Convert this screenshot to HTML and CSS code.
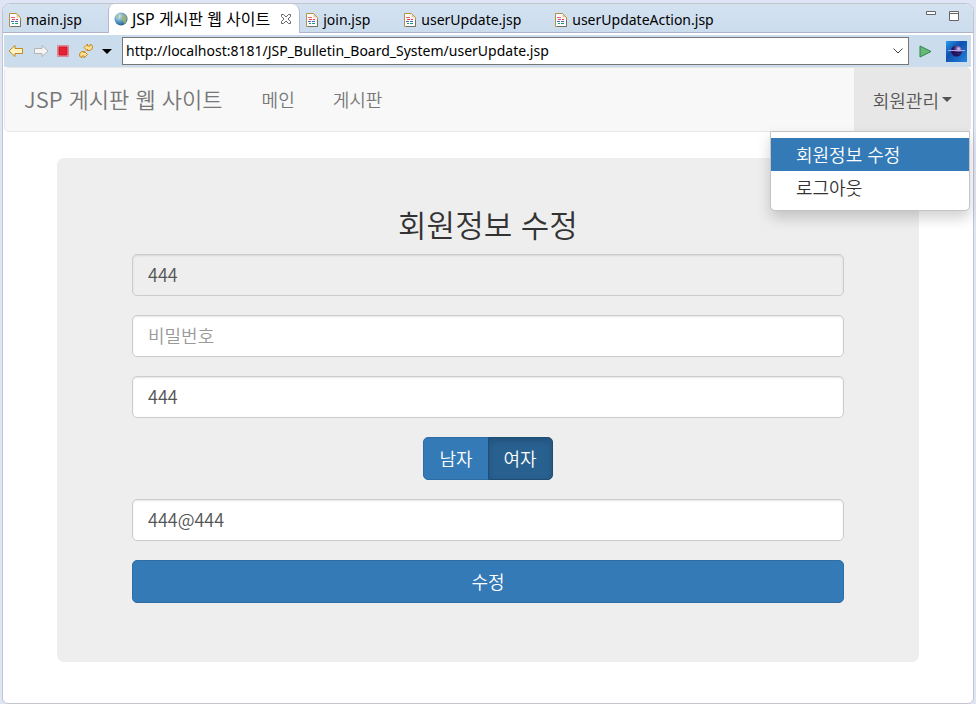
FILE: index.html
```html
<!DOCTYPE html>
<html lang="ko">
<head>
<meta charset="utf-8">
<title>JSP 게시판 웹 사이트</title>
<link rel="stylesheet" href="styles.css">
</head>
<body>
<svg class="defs" aria-hidden="true">
  <symbol id="file" viewBox="0 0 12 14">
    <path d="M.5.500h7l4 4v9H.5z" fill="#f8fbff" stroke="#b8903f"/>
    <path d="M11.500 7v6.500H2" fill="none" stroke="#77705e"/>
    <path d="M7.500 1v3.500H11z" fill="#e8cf91"/>
    <path d="M2 4.500h4" stroke="#f0606f"/><path d="M3 6.500h3M7 6.500h2" stroke="#ee3f55"/>
    <path d="M2 8.500h3M6 8.500h3" stroke="#4a68b8"/><path d="M3 10.500h2M6 10.500h3" stroke="#1f9d68"/>
  </symbol>
</svg>
<div class="editor">
  <nav class="tabs" aria-label="Editors">
    <a class="tab" href="#"><svg class="file"><use href="#file"/></svg>main.jsp</a>
    <a class="tab tab-active" href="#" aria-current="page">
      <svg class="globe" viewBox="0 0 14 14">
        <defs><radialGradient id="sea" cx=".35" cy=".3" r=".8"><stop offset="0" stop-color="#d5ecf8"/><stop offset=".5" stop-color="#5b9cc8"/><stop offset="1" stop-color="#214f7c"/></radialGradient></defs>
        <circle cx="7" cy="7" r="6.500" fill="url(#sea)"/>
        <path d="M8 2l3 1 2 3-1 4-2 2-1-3-2-2 1-2zM2 4l2-2 1 2-1 2z" fill="#a9b96d" opacity=".8"/>
      </svg>
      <span class="tab-title">JSP 게시판 웹 사이트</span>
      <svg class="close" viewBox="0 0 12 12"><path d="M1.500 1.500h2L6 4l2.500-2.500h2v2L8 6l2.500 2.500v2h-2L6 8l-2.500 2.500h-2v-2L4 6 1.500 3.500z" fill="#fff" stroke="#666"/></svg>
    </a>
    <a class="tab" href="#"><svg class="file"><use href="#file"/></svg>join.jsp</a>
    <a class="tab" href="#"><svg class="file"><use href="#file"/></svg>userUpdate.jsp</a>
    <a class="tab" href="#"><svg class="file"><use href="#file"/></svg>userUpdateAction.jsp</a>
    <div class="window-buttons">
      <button aria-label="Minimize"><svg width="10" height="10" viewBox="0 0 10 10"><path d="M.5.500h9v3h-9z" fill="#fff" stroke="#666"/></svg></button>
      <button aria-label="Maximize"><svg width="10" height="10" viewBox="0 0 10 10"><path d="M.5.500h9v9h-9zM.5 2.500h9" fill="#fff" stroke="#666"/></svg></button>
    </div>
  </nav>
  <div class="toolbar">
    <div class="tools">
      <button aria-label="Back"><svg width="16" height="14" viewBox="0 0 16 14"><path d="M1 7l6-5.500v3h7.500v5H7v3z" fill="#fff3c4" stroke="#c28a20" stroke-linejoin="round"/></svg></button>
      <button aria-label="Forward"><svg width="16" height="14" viewBox="0 0 16 14"><path d="M15 7L9 1.500v3H1.500v5H9v3z" fill="#f4f4f4" stroke="#b4b4b4" stroke-linejoin="round"/></svg></button>
      <button aria-label="Stop"><svg width="12" height="12" viewBox="0 0 12 12"><path d="M.5.500h11v11H.5z" fill="#f0a5ad" stroke="#d68a98"/><path d="M2 2h8v8H2z" fill="#e32334" stroke="#cc1427"/></svg></button>
      <button aria-label="Refresh"><svg width="16" height="16" viewBox="0 0 16 16"><path d="M6 4.500L9.500 1v2h2.500V1.500q2.500 0 2.500 2.500T12 7.500h-2.500V6h0v2zM9.500 11.500L6 15v-2H4v1.500q-2.500 0-2.500-2.500T4 8.500h2V10h0V8z" fill="#ffe091" stroke="#c58a25" stroke-linejoin="round"/></svg></button>
      <button aria-label="Refresh options"><svg width="10" height="5" viewBox="0 0 10 5"><path d="M0 0h10L5 5z"/></svg></button>
    </div>
    <div class="address">
      <input type="text" aria-label="URL" value="http://localhost:8181/JSP_Bulletin_Board_System/userUpdate.jsp">
      <button aria-label="URL history"><svg width="10" height="6" viewBox="0 0 10 6"><path d="M.5.500L5 5 9.500.500" fill="none" stroke="#444"/></svg></button>
    </div>
    <button class="go" aria-label="Go"><svg width="13" height="13" viewBox="0 0 13 13"><path d="M1 1l11 5.500L1 12z" fill="#69b978" stroke="#29834a" stroke-linejoin="round"/></svg></button>
    <svg class="eclipse" viewBox="0 0 21 21">
      <defs><linearGradient id="sky" x2="1" y2="1"><stop stop-color="#2a9cf0"/><stop offset=".4" stop-color="#1050ae"/><stop offset="1" stop-color="#2384dd"/></linearGradient>
      <radialGradient id="planet" cx=".7" cy=".3"><stop stop-color="#e4d5f5"/><stop offset=".5" stop-color="#6953a5"/><stop offset="1" stop-color="#24165c"/></radialGradient></defs>
      <path d="M0 0h21v21H0z" fill="url(#sky)"/><circle cx="10.500" cy="10" r="5.500" fill="url(#planet)"/><path d="M2 9.500h17" stroke="#b2a8e9"/><path d="M6 11.500h9" stroke="#201052"/>
    </svg>
  </div>
  <div class="site">
    <header class="navbar">
      <a class="brand" href="#">JSP 게시판 웹 사이트</a>
      <nav class="links"><a href="#">메인</a><a href="#">게시판</a></nav>
      <div class="member">
        <button class="member-toggle" aria-expanded="true">회원관리<span class="caret"></span></button>
        <div class="dropdown"><a class="current" href="#">회원정보 수정</a><a href="#">로그아웃</a></div>
      </div>
    </header>
    <main class="panel">
      <form>
        <h1>회원정보 수정</h1>
        <input class="field" type="text" aria-label="아이디" value="444" readonly>
        <input class="field" type="password" aria-label="비밀번호" placeholder="비밀번호">
        <input class="field" type="text" aria-label="이름" value="444">
        <div class="gender" role="radiogroup" aria-label="성별">
          <label><input type="radio" name="gender">남자</label>
          <label><input type="radio" name="gender" checked>여자</label>
        </div>
        <input class="field" type="text" aria-label="이메일" value="444@444">
        <button class="submit" type="submit">수정</button>
      </form>
    </main>
  </div>
</div>
</body>
</html>
```
FILE: styles.css
```css
* { box-sizing: border-box; }
body {
  margin: 0;
  padding: 3px 2px 0;
  min-height: 100vh;
  display: flex;
  background: #e0e5f5;
  color: #000;
  font: 14px/20px "Noto Sans", "Noto Sans CJK KR", sans-serif;
}
a { color: inherit; text-decoration: none; }
button { padding: 0; border: 0; background: none; color: inherit; font: inherit; }
input { font: inherit; }
svg { display: block; flex: none; }
.defs { position: absolute; width: 0; height: 0; }
.editor {
  flex: 1;
  min-width: 0;
  border: 1px solid #c3c5cd;
  border-radius: 8px 8px 6px 6px;
  background: #fff;
}
.tabs {
  display: flex;
  height: 29px;
  border-bottom: 1px solid #afb4cb;
  border-radius: 7px 7px 0 0;
  background: linear-gradient(#d4e2f0, #cbdced);
}
.tab { display: flex; align-items: center; gap: 5px; padding: 3px 26px 0 6px; white-space: nowrap; }
.tab-active {
  height: 29px;
  gap: 4px;
  padding: 0 7px 0 5px;
  border: solid #b5bad0;
  border-width: 0 1px;
  border-radius: 6px 8px 0 0;
  background: #fff;
}
.tab-active ~ .tab { padding-right: 28px; }
.tab-title { font-size: 16px; }
.file { width: 12px; height: 14px; }
.globe { width: 14px; height: 14px; }
.close { width: 12px; height: 12px; margin-left: 6px; }
.window-buttons { display: flex; gap: 13px; margin: 7px 14px 0 auto; align-self: flex-start; }
.toolbar {
  display: flex;
  align-items: center;
  height: 32px;
  margin: 2px 2px 0 1px;
  padding-right: 4px;
  background: #cbdced;
}
.tools { display: flex; align-items: center; justify-content: space-between; width: 104px; margin: 0 10px 0 4px; }
.address { flex: 1; display: flex; height: 28px; border: 1px solid #777; background: #fff; }
.address input { flex: 1; min-width: 0; padding: 0 3px; border: 0; outline: 0; background: none; }
.address button { padding: 0 5px; }
.go { margin: 0 14px 0 10px; }
.eclipse { width: 21px; height: 21px; }
.site {
  margin: 0 2px 0 1px;
  color: #333;
  font-family: "Noto Sans CJK KR", sans-serif;
  font-size: 18px;
  font-weight: 350;
  line-height: 26px;
}
.navbar {
  display: flex;
  align-items: stretch;
  height: 65px;
  border: 1px solid #e7e7e7;
  border-radius: 5px;
  background: #f8f8f8;
  color: #777;
}
.brand { padding: 17px 20px 0 19px; font-size: 22px; }
.links { display: flex; }
.links a { padding: 18px 19px 0; }
.member { position: relative; margin-left: auto; display: flex; }
.member-toggle {
  display: flex;
  align-items: center;
  gap: 3px;
  padding: 0 18px 0 19px;
  background: #e7e7e7;
  color: #555;
}
.caret { border: 5px solid transparent; border-top-color: #555; border-bottom: 0; }
.dropdown {
  position: absolute;
  top: 100%;
  right: 0;
  width: 200px;
  padding: 6px 0;
  border: 1px solid #c4c4c4;
  border-radius: 0 0 5px 5px;
  background: #fff;
  box-shadow: 0 7px 14px rgba(0, 0, 0, .18);
  color: #333;
}
.dropdown a { display: block; padding: 0 25px; line-height: 33px; }
.dropdown .current { background: #337ab7; color: #fff; }
.panel {
  margin: 26px 52px 0 53px;
  padding: 46px 75px 59px;
  border-radius: 7px;
  background: #eee;
}
form { display: flex; flex-direction: column; gap: 19px; }
h1 {
  margin: 0 0 -9px;
  font-size: 31px;
  font-weight: 350;
  line-height: 40px;
  text-align: center;
}
.field {
  width: 100%;
  height: 42px;
  padding: 0 15px 2px;
  border: 1px solid #ccc;
  border-radius: 5px;
  outline: 0;
  background: #fff;
  box-shadow: inset 0 1px 2px rgba(0, 0, 0, .1);
  color: #555;
}
.field:read-only { background: #eee; }
.field::placeholder { color: #999; opacity: 1; }
.gender { display: flex; align-self: center; color: #fff; }
.gender label {
  display: flex;
  align-items: center;
  height: 43px;
  padding: 0 15px 2px;
  border: 1px solid #2e6da4;
  border-radius: 5px 0 0 5px;
  background: #337ab7;
}
.gender label + label { margin-left: -1px; border-radius: 0 5px 5px 0; }
.gender label:has(:checked) {
  border-color: #204d74;
  background: #286090;
  box-shadow: inset 0 3px 6px rgba(0, 0, 0, .15);
}
.gender input { position: absolute; opacity: 0; pointer-events: none; }
.submit { height: 43px; padding-bottom: 2px; border: 1px solid #2e6da4; border-radius: 5px; background: #337ab7; color: #fff; }
```
